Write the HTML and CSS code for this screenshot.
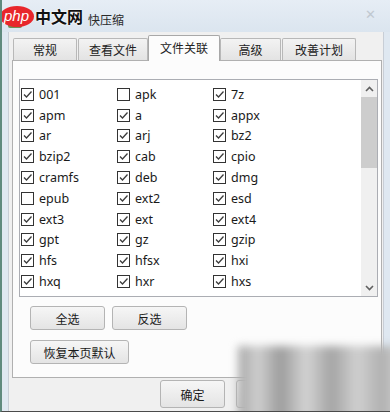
FILE: index.html
```html
<!DOCTYPE html>
<html lang="zh-CN">
<head>
  <meta charset="UTF-8" />
  <title>文件关联</title>
  <link rel="stylesheet" href="styles.css">
</head>
<body>

<div class="window">
  <div class="titlebar">
    <span class="app-icon"></span>
    <span class="title">快压缩</span>
    <span class="close">&#x2715;</span>
  </div>

  <div class="client">
    <div class="tabs">
      <div class="tab w1">常规</div>
      <div class="tab w2">查看文件</div>
      <div class="tab w3 active">文件关联</div>
      <div class="tab w4">高级</div>
      <div class="tab w5">改善计划</div>
    </div>

    <div class="panel">
      <div class="listbox">
        <div class="grid" id="grid"></div>
        <div class="scrollbar">
          <div class="sb-arrow">
            <svg width="9" height="6" viewBox="0 0 9 6"><path d="M1 5 L4.5 1.5 L8 5" fill="none" stroke="#606060" stroke-width="1.6"/></svg>
          </div>
          <div class="sb-thumb"></div>
          <div class="sb-track"></div>
          <div class="sb-arrow">
            <svg width="9" height="6" viewBox="0 0 9 6"><path d="M1 1 L4.5 4.5 L8 1" fill="none" stroke="#606060" stroke-width="1.6"/></svg>
          </div>
        </div>
      </div>

      <div class="btn-row">
        <button class="btn small">全选</button>
        <button class="btn small">反选</button>
      </div>
      <div class="btn-row">
        <button class="btn wide">恢复本页默认</button>
      </div>
    </div>

    <div class="footer">
      <button class="btn dlg">确定</button>
      <button class="btn dlg">取消</button>
    </div>
  </div>

  <!-- watermarks -->
  <div class="wm-logo"><span class="wm-php">php</span><span class="wm-cn">中文网</span></div>
  <div class="wm-blur"></div>
</div>

<script>
  var exts = ['001','apk','7z','apm','a','appx','ar','arj','bz2','bzip2','cab','cpio',
              'cramfs','deb','dmg','epub','ext2','esd','ext3','ext','ext4','gpt','gz','gzip',
              'hfs','hfsx','hxi','hxq','hxr','hxs'];
  var off = ['apk', 'epub'];
  var grid = document.getElementById('grid');
  var check = '<svg width="11" height="11" viewBox="0 0 11 11"><path d="M2 5.5 L4.5 8 L9.5 2.5" fill="none" stroke="#3c3c3c" stroke-width="1.3"/></svg>';
  exts.forEach(function(e) {
    var item = document.createElement('div');
    item.className = 'item';
    var box = '<span class="cb">' + (off.indexOf(e) < 0 ? check : '') + '</span>';
    item.innerHTML = box + '<span class="lbl">' + e + '</span>';
    grid.appendChild(item);
  });
</script>

</body>
</html>
```

FILE: styles.css
```css
body {
  margin: 0;
  padding: 0;
  background: #fff;
  font-family: "Noto Sans", "Noto Sans CJK SC", sans-serif;
  font-size: 12px;
  color: #1a1a1a;
}
.window {
  position: relative;
  width: 390px;
  height: 412px;
  box-sizing: border-box;
  background: #dfe8f1;
  border-left: 2px solid #5f8a7e;
  border-bottom: 1px solid #4a4a4a;
  overflow: hidden;
}
.titlebar {
  height: 32px;
  display: flex;
  align-items: center;
  padding-left: 6px;
  background: linear-gradient(#e6edf5, #dbe5ef);
}
.app-icon {
  width: 14px;
  height: 14px;
  margin-top: 10px;
  background: #6e8f58;
  border-radius: 2px;
}
.title {
  margin-left: 66px;
  margin-top: 6px;
  color: #2a2a2a;
  font-family: "Noto Sans CJK SC", sans-serif;
  font-size: 12px;
}
.close {
  margin-left: auto;
  margin-right: 14px;
  margin-top: -4px;
  color: #c0c8d0;
  font-size: 13px;
}
.client {
  margin: 0 6px 0 6px;
  height: 379px;
  background: #f0f0f0;
  border-left: 1px solid #c8ced6;
  border-right: 1px solid #c8ced6;
  padding: 3px 0 0 3px;
  box-sizing: border-box;
}
.tabs {
  display: flex;
  align-items: flex-end;
  height: 25px;
  padding-left: 1px;
}
.tab {
  height: 22px;
  box-sizing: border-box;
  border: 1px solid #b8b8b8;
  border-bottom: none;
  border-radius: 2px 2px 0 0;
  background: linear-gradient(#f3f3f3, #e3e3e3);
  display: flex;
  align-items: center;
  justify-content: center;
  font-family: "Noto Sans CJK SC", sans-serif;
  color: #222;
  margin-right: 1px;
}
.tab.w1 { width: 64px; }
.tab.w2 { width: 70px; }
.tab.w3 { width: 72px; }
.tab.w4 { width: 61px; }
.tab.w5 { width: 74px; }
.tab.active {
  height: 26px;
  background: #fcfcfc;
  border-color: #a8a8a8;
  margin: 0 0 -1px -1px;
  position: relative;
  z-index: 1;
  padding-bottom: 2px;
}
.panel {
  width: 370px;
  height: 318px;
  box-sizing: border-box;
  border: 1px solid #b0b0b0;
  background: #fcfcfc;
  padding: 18px 3px 0 6px;
}
.listbox {
  height: 218px;
  box-sizing: border-box;
  border: 1px solid #abadb3;
  background: #fff;
  display: flex;
}
.grid {
  flex: 1;
  display: grid;
  grid-template-columns: 96px 96px 96px;
  grid-auto-rows: 20.8px;
  padding: 4px 0 0 1px;
  overflow: hidden;
}
.item {
  display: flex;
  align-items: center;
}
.cb {
  width: 13px;
  height: 13px;
  box-sizing: border-box;
  border: 1px solid #333;
  background: #fff;
  display: flex;
  align-items: center;
  justify-content: center;
}
.lbl {
  margin-left: 5px;
  font-size: 12.5px;
  color: #1a1a1a;
}
.scrollbar {
  width: 16px;
  background: #f0f0f0;
  display: flex;
  flex-direction: column;
}
.sb-arrow {
  height: 17px;
  display: flex;
  align-items: center;
  justify-content: center;
}
.sb-thumb {
  height: 71px;
  background: #cdcdcd;
}
.sb-track {
  flex: 1;
}
.btn-row {
  display: flex;
  gap: 7px;
  margin: 9px 0 0 11px;
}
.btn-row + .btn-row {
  margin-top: 10px;
}
.btn {
  height: 24px;
  box-sizing: border-box;
  border: 1px solid #b4b4b4;
  border-radius: 3px;
  background: linear-gradient(#f6f6f6, #e4e4e4);
  font-family: "Noto Sans CJK SC", sans-serif;
  font-size: 12px;
  color: #1a1a1a;
  padding: 0;
}
.btn.small { width: 75px; }
.btn.wide { width: 99px; }
.footer {
  display: flex;
  gap: 11px;
  padding: 2px 0 0 148px;
}
.btn.dlg {
  width: 65px;
  height: 28px;
}
.wm-logo {
  position: absolute;
  left: -2px;
  top: 4px;
  display: flex;
  align-items: center;
}
.wm-php {
  background: #e8262b;
  color: #fff;
  font-family: "Liberation Sans", sans-serif;
  font-style: italic;
  font-size: 15px;
  padding: 1px 5px 3px 4px;
  border-radius: 50%;
}
.wm-cn {
  font-family: "Noto Sans CJK SC", sans-serif;
  font-weight: bold;
  font-size: 16px;
  color: #111;
  margin-left: 1px;
  text-shadow: 0 0 2px #fff, 0 0 2px #fff;
}
.wm-blur {
  position: absolute;
  left: 236px;
  top: 346px;
  width: 170px;
  height: 90px;
  background:
    linear-gradient(90deg, #a8a8a8 0%, #cfcfcf 12%, #9c9c9c 25%, #d4d4d4 40%, #a4a4a4 55%, #d0d0d0 70%, #b0b0b0 85%, #e0e0e0 100%);
  filter: blur(4px);
}
```
